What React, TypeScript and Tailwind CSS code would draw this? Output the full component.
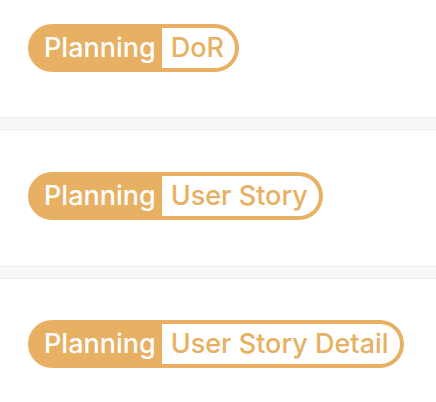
const stories = ['DoR', 'User Story', 'User Story Detail'];

function PhaseBadge({ phase, label }: { phase: string; label: string }) {
  return (
    <div className="inline-flex h-12 items-stretch rounded-full bg-[#e7b062] p-1 text-[27px] font-medium leading-10">
      <span className="pl-3 pr-[6px] text-white">{phase}</span>
      <span className="rounded-r-full bg-white pl-[9px] pr-[11px] text-[#e7b062]">{label}</span>
    </div>
  );
}

function Divider() {
  return <div className="h-[13px] border-y border-[#ececec] bg-[#f8f8f8]" />;
}

export default function App() {
  return (
    <main className="min-h-screen bg-white" style={{ fontFamily: 'Inter, "Noto Sans", sans-serif' }}>
      <section className="px-7 pb-[45px] pt-6">
        <PhaseBadge phase="Planning" label={stories[0]} />
      </section>
      <Divider />
      <section className="px-7 pb-[46px] pt-[42px]">
        <PhaseBadge phase="Planning" label={stories[1]} />
      </section>
      <Divider />
      <section className="px-7 pb-[46px] pt-[41px]">
        <PhaseBadge phase="Planning" label={stories[2]} />
      </section>
    </main>
  );
}
